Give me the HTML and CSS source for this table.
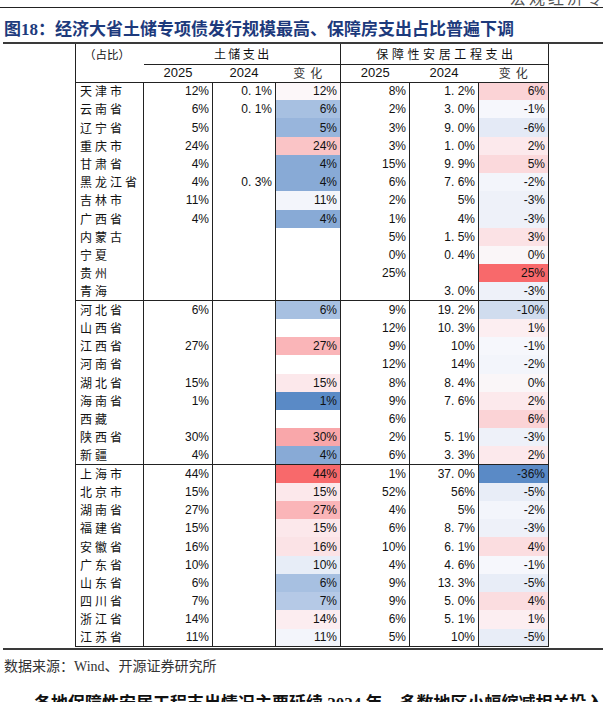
FILE: index.html
```html
<!DOCTYPE html>
<html lang="zh-CN">
<head>
<meta charset="utf-8">
<title>图18</title>
<link rel="stylesheet" href="styles.css">
</head>
<body>
<div class="page">
  <div class="runhead"><span>宏观经济专题</span></div>
  <h1 class="fig-title">图18：经济大省土储专项债发行规模最高、保障房支出占比普遍下调</h1>
  <table class="tbl">
    <colgroup>
      <col class="c-name"><col class="c-a"><col class="c-b"><col class="c-c"><col class="c-d"><col class="c-e"><col class="c-f">
    </colgroup>
    <thead>
      <tr class="h1">
        <th class="hname" rowspan="2">（占比）</th>
        <th class="grp grp-a" colspan="3">土储支出</th>
        <th class="grp grp-b" colspan="3">保障性安居工程支出</th>
      </tr>
      <tr class="h2">
        <th>2025</th><th>2024</th><th class="chg endgrp">变化</th>
        <th>2025</th><th>2024</th><th class="chg">变化</th>
      </tr>
    </thead>
    <tbody>
      <tr><td class="nm">天津市</td><td>12%</td><td>0. 1%</td><td class="endgrp" style="background:#FCF7F9">12%</td><td>8%</td><td>1. 2%</td><td style="background:#FBD3D6">6%</td></tr>
      <tr><td class="nm">云南省</td><td>6%</td><td>0. 1%</td><td class="endgrp" style="background:#A7C0E1">6%</td><td>2%</td><td>3. 0%</td><td style="background:#F6F7FC">-1%</td></tr>
      <tr><td class="nm">辽宁省</td><td>5%</td><td></td><td class="endgrp" style="background:#98B5DC">5%</td><td>3%</td><td>9. 0%</td><td style="background:#E4EAF6">-6%</td></tr>
      <tr><td class="nm">重庆市</td><td>24%</td><td></td><td class="endgrp" style="background:#FAC4C6">24%</td><td>3%</td><td>1. 0%</td><td style="background:#FCE9EC">2%</td></tr>
      <tr><td class="nm">甘肃省</td><td>4%</td><td></td><td class="endgrp" style="background:#88AAD6">4%</td><td>15%</td><td>9. 9%</td><td style="background:#FBD9DC">5%</td></tr>
      <tr><td class="nm">黑龙江省</td><td>4%</td><td>0. 3%</td><td class="endgrp" style="background:#88AAD6">4%</td><td>6%</td><td>7. 6%</td><td style="background:#F3F5FB">-2%</td></tr>
      <tr><td class="nm">吉林市</td><td>11%</td><td></td><td class="endgrp" style="background:#F3F5FB">11%</td><td>2%</td><td>5%</td><td style="background:#EEF1F9">-3%</td></tr>
      <tr><td class="nm">广西省</td><td>4%</td><td></td><td class="endgrp" style="background:#88AAD6">4%</td><td>1%</td><td>4%</td><td style="background:#EEF1F9">-3%</td></tr>
      <tr><td class="nm">内蒙古</td><td></td><td></td><td class="endgrp"></td><td>5%</td><td>1. 5%</td><td style="background:#FBE2E5">3%</td></tr>
      <tr><td class="nm">宁夏</td><td></td><td></td><td class="endgrp"></td><td>0%</td><td>0. 4%</td><td style="background:#FAF6F8">0%</td></tr>
      <tr><td class="nm">贵州</td><td></td><td></td><td class="endgrp"></td><td>25%</td><td></td><td style="background:#F8696B">25%</td></tr>
      <tr><td class="nm">青海</td><td></td><td></td><td class="endgrp"></td><td></td><td>3. 0%</td><td style="background:#EEF1F9">-3%</td></tr>
      <tr class="gstart"><td class="nm">河北省</td><td>6%</td><td></td><td class="endgrp" style="background:#A7C0E1">6%</td><td>9%</td><td>19. 2%</td><td style="background:#D0DCEE">-10%</td></tr>
      <tr><td class="nm">山西省</td><td></td><td></td><td class="endgrp"></td><td>12%</td><td>10. 3%</td><td style="background:#FCEEF1">1%</td></tr>
      <tr><td class="nm">江西省</td><td>27%</td><td></td><td class="endgrp" style="background:#FAB5B8">27%</td><td>9%</td><td>10%</td><td style="background:#F6F7FC">-1%</td></tr>
      <tr><td class="nm">河南省</td><td></td><td></td><td class="endgrp"></td><td>12%</td><td>14%</td><td style="background:#F3F5FB">-2%</td></tr>
      <tr><td class="nm">湖北省</td><td>15%</td><td></td><td class="endgrp" style="background:#FCE8EB">15%</td><td>8%</td><td>8. 4%</td><td style="background:#FAF6F8">0%</td></tr>
      <tr><td class="nm">海南省</td><td>1%</td><td></td><td class="endgrp" style="background:#5A8AC6">1%</td><td>9%</td><td>7. 6%</td><td style="background:#FCE9EC">2%</td></tr>
      <tr><td class="nm">西藏</td><td></td><td></td><td class="endgrp"></td><td>6%</td><td></td><td style="background:#FBD3D6">6%</td></tr>
      <tr><td class="nm">陕西省</td><td>30%</td><td></td><td class="endgrp" style="background:#F9A7AA">30%</td><td>2%</td><td>5. 1%</td><td style="background:#EEF1F9">-3%</td></tr>
      <tr><td class="nm">新疆</td><td>4%</td><td></td><td class="endgrp" style="background:#88AAD6">4%</td><td>6%</td><td>3. 3%</td><td style="background:#FCE9EC">2%</td></tr>
      <tr class="gstart"><td class="nm">上海市</td><td>44%</td><td></td><td class="endgrp" style="background:#F8696B">44%</td><td>1%</td><td>37. 0%</td><td style="background:#5A8AC6">-36%</td></tr>
      <tr><td class="nm">北京市</td><td>15%</td><td></td><td class="endgrp" style="background:#FCE8EB">15%</td><td>52%</td><td>56%</td><td style="background:#E8EDF7">-5%</td></tr>
      <tr><td class="nm">湖南省</td><td>27%</td><td></td><td class="endgrp" style="background:#FAB5B8">27%</td><td>4%</td><td>5%</td><td style="background:#F3F5FB">-2%</td></tr>
      <tr><td class="nm">福建省</td><td>15%</td><td></td><td class="endgrp" style="background:#FCE8EB">15%</td><td>6%</td><td>8. 7%</td><td style="background:#EEF1F9">-3%</td></tr>
      <tr><td class="nm">安徽省</td><td>16%</td><td></td><td class="endgrp" style="background:#FBE3E6">16%</td><td>10%</td><td>6. 1%</td><td style="background:#FBDDE0">4%</td></tr>
      <tr><td class="nm">广东省</td><td>10%</td><td></td><td class="endgrp" style="background:#E7EDF7">10%</td><td>4%</td><td>4. 6%</td><td style="background:#F6F7FC">-1%</td></tr>
      <tr><td class="nm">山东省</td><td>6%</td><td></td><td class="endgrp" style="background:#A7C0E1">6%</td><td>9%</td><td>13. 3%</td><td style="background:#E8EDF7">-5%</td></tr>
      <tr><td class="nm">四川省</td><td>7%</td><td></td><td class="endgrp" style="background:#B5C9E6">7%</td><td>9%</td><td>5. 0%</td><td style="background:#FBDDE0">4%</td></tr>
      <tr><td class="nm">浙江省</td><td>14%</td><td></td><td class="endgrp" style="background:#FCEDF0">14%</td><td>6%</td><td>5. 1%</td><td style="background:#FCEEF1">1%</td></tr>
      <tr><td class="nm">江苏省</td><td>11%</td><td></td><td class="endgrp" style="background:#F3F5FB">11%</td><td>5%</td><td>10%</td><td style="background:#E8EDF7">-5%</td></tr>
    </tbody>
  </table>
  <div class="rule"></div>
  <p class="source">数据来源：<span class="latin">Wind</span>、开源证券研究所</p>
  <p class="body-text">各地保障性安居工程支出情况主要延续 <span class="latin">2024</span> 年，多数地区小幅缩减相关投入</p>
</div>
</body>
</html>
```

FILE: styles.css
```css
* { box-sizing: border-box; }

html, body {
  margin: 0;
  padding: 0;
  background: #ffffff;
}

body {
  width: 603px;
  height: 702px;
  overflow: hidden;
  font-family: "Noto Sans CJK SC", sans-serif;
  color: #111;
}

.page {
  width: 603px;
}

.runhead {
  height: 8px;
  border-bottom: 1px solid #222;
  overflow: hidden;
  padding-left: 510px;
  white-space: nowrap;
}

.runhead span {
  display: block;
  font-size: 16px;
  line-height: 16px;
  margin-top: -11px;
  color: #555;
  letter-spacing: 3px;
}

.fig-title {
  margin: 12px 0 0 3px;
  padding: 0 0 2px 1px;
  font-family: "Liberation Serif", "Noto Sans CJK SC", serif;
  font-size: 17px;
  font-weight: 700;
  line-height: 20px;
  color: #1d3a7c;
  border-bottom: 2px solid #3a3a3a;
  white-space: nowrap;
}

.tbl {
  margin-left: 75px;
  border-collapse: collapse;
  table-layout: fixed;
  width: 473px;
  border-left: 1px solid #222;
  border-right: 1px solid #222;
  border-bottom: 1px solid #222;
}

.c-name { width: 68px; }
.c-a { width: 69px; }
.c-b { width: 63px; }
.c-c { width: 65px; }
.c-d { width: 69px; }
.c-e { width: 69px; }
.c-f { width: 70px; }

th {
  font-weight: 400;
  padding: 0;
  text-align: center;
  vertical-align: middle;
  white-space: nowrap;
}

.h1 th { height: 20px; }
.h2 th {
  height: 18px;
  border-bottom: 1px solid #222;
  font-family: "Liberation Sans", sans-serif;
  font-size: 13px;
  line-height: 16px;
}

.hname {
  vertical-align: top;
  text-align: left;
  padding: 2px 0 0 8px;
  font-size: 11.5px;
  line-height: 16px;
  border-bottom: 1px solid #222;
}

.grp {
  font-size: 12px;
  line-height: 16px;
  border-bottom: 1px solid #222;
}

.grp-a {
  letter-spacing: 2.4px;
  padding-left: 2px;
  border-right: 1px solid #222;
}

.grp-b {
  letter-spacing: 3.6px;
  padding-left: 4px;
}

.h2 th.chg {
  font-family: "Noto Sans CJK SC", sans-serif;
  font-size: 12px;
  letter-spacing: 5px;
  padding-left: 5px;
  color: #333;
}

.h2 th.endgrp { border-right: 1px solid #222; }

td {
  height: 18.23px;
  padding: 0 3px 0 0;
  text-align: right;
  vertical-align: middle;
  white-space: nowrap;
  font-family: "Liberation Sans", sans-serif;
  font-size: 12px;
  line-height: 14px;
  border-right: 1px solid #222;
}

td.nm {
  text-align: left;
  padding: 0 0 0 4px;
  font-family: "Noto Sans CJK SC", sans-serif;
  letter-spacing: 3px;
}

.gstart td { border-top: 1px solid #222; }

.rule {
  margin: 1px 0 0 3px;
  border-top: 2px solid #3a3a3a;
}

.source {
  margin: 5px 0 0 4px;
  font-size: 14px;
  line-height: 20px;
  color: #333;
}

.latin {
  font-family: "Liberation Serif", serif;
}

.body-text {
  margin: 16px 0 0 0;
  text-indent: 34px;
  font-family: "Liberation Serif", "Noto Sans CJK SC", serif;
  font-size: 17px;
  font-weight: 700;
  line-height: 22px;
  white-space: nowrap;
  color: #111;
}
```
